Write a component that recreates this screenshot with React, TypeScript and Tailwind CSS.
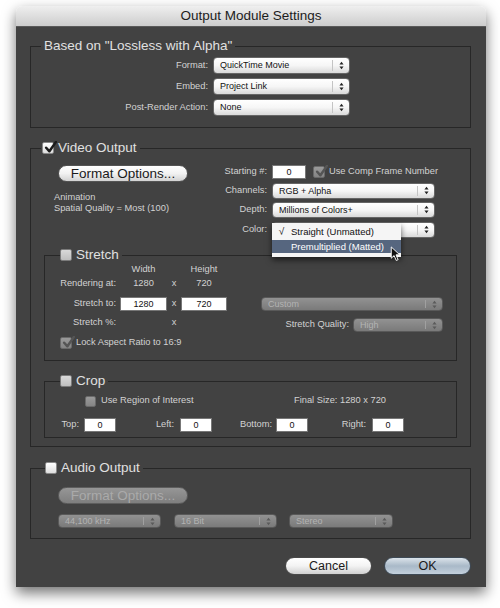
import clsx from 'clsx'

type BoxKind = 'on' | 'off' | 'grayOn' | 'grayOff'

function Check({ kind, className }: { kind: BoxKind; className?: string }) {
  const gray = kind === 'grayOn' || kind === 'grayOff'
  const checked = kind === 'on' || kind === 'grayOn'
  return (
    <span
      className={clsx(
        'relative inline-block shrink-0 rounded-[2px] border',
        gray
          ? 'border-[#6a6a6a] bg-linear-to-b from-[#9a9a9a] to-[#858585]'
          : 'border-[#8a8a8a] bg-linear-to-b from-white to-[#dedede]',
        className
      )}
    >
      {checked && (
        <svg viewBox="0 0 12 12" className="absolute left-[1px] -top-[2px] h-[13px] w-[13px]">
          <path
            d="M2 6.2 L5 9.5 L11 0.8"
            fill="none"
            stroke={gray ? '#555555' : '#1c1c1c'}
            strokeWidth="2.3"
            strokeLinecap="round"
            strokeLinejoin="round"
          />
        </svg>
      )}
    </span>
  )
}

function Stepper({ disabled }: { disabled?: boolean }) {
  const c = disabled ? '#5a5a5a' : '#222222'
  return (
    <svg viewBox="0 0 6 10" className="h-[9px] w-[5px]">
      <path d="M3 0.5 L5.5 3.8 L0.5 3.8 Z" fill={c} />
      <path d="M3 9.5 L5.5 6.2 L0.5 6.2 Z" fill={c} />
    </svg>
  )
}

function Select({ value, className, disabled }: { value: string; className: string; disabled?: boolean }) {
  return (
    <div
      className={clsx(
        'flex items-center rounded-[4px] border',
        disabled
          ? 'border-[#595959] bg-linear-to-b from-[#929292] to-[#7a7a7a] text-[#b3b3b3]'
          : 'border-[#666] bg-linear-to-b from-white via-[#f6f6f6] to-[#d9d9d9] text-[#111]',
        className
      )}
    >
      <span className="flex-1 truncate pl-[6px] text-[9px] leading-none">{value}</span>
      <span
        className={clsx(
          'flex h-[70%] w-[17px] items-center justify-center border-l',
          disabled ? 'border-[#a0a0a0]' : 'border-[#c4c4c4]'
        )}
      >
        <Stepper disabled={disabled} />
      </span>
    </div>
  )
}

function Field({ value, className }: { value: string; className: string }) {
  return (
    <div
      className={clsx(
        'flex items-center justify-center border border-[#777] bg-white text-[9px] leading-none text-[#111]',
        className
      )}
    >
      {value}
    </div>
  )
}

function PillButton({ label, disabled }: { label: string; disabled?: boolean }) {
  return (
    <div
      className={clsx(
        'flex h-[17px] w-[130px] items-center justify-center rounded-full border text-[13.5px] leading-none',
        disabled
          ? 'border-[#5e5e5e] bg-linear-to-b from-[#969696] to-[#7f7f7f] text-[#aaaaaa]'
          : 'border-[#555] bg-linear-to-b from-white via-[#f2f2f2] to-[#d2d2d2] text-[#1a1a1a]'
      )}
    >
      {label}
    </div>
  )
}

function BoxLegend({ kind, label, className, boxClass }: { kind: BoxKind; label: string; className: string; boxClass?: string }) {
  return (
    <legend className={clsx('pr-[3px] text-[13.5px] text-[#e0e0e0]', className)}>
      <span className="flex h-[16px] items-center gap-[4px] leading-none">
        <Check kind={kind} className={clsx('h-[12px] w-[12px]', boxClass)} />
        {label}
      </span>
    </legend>
  )
}

export default function App() {
  return (
    <div className="h-[608px] w-[500px] bg-white pl-[16px] pt-[6px] font-['Liberation_Sans',Arial,sans-serif] text-[9.3px] text-[#d2d2d2]">
      <div className="flex h-[581px] w-[470px] flex-col overflow-hidden rounded-t-[6px] shadow-[0_6px_14px_rgba(0,0,0,0.55)]">
        {/* title bar */}
        <div className="flex h-[21px] items-center justify-center border-b border-[#5a5a5a] bg-linear-to-b from-[#efefef] to-[#cdcdcd] text-[13.5px] text-[#1c1c1c]">
          Output Module Settings
        </div>

        <div className="flex-1 bg-[#424242] pl-[14px] pr-[15px] pt-[11px]">
          {/* Based on */}
          <fieldset className="border border-[#272727] pb-[11px]">
            <legend className="ml-[10px] px-[3px] text-[13.5px] leading-[16px] text-[#e0e0e0]">
              Based on "Lossless with Alpha"
            </legend>
            <div className="flex flex-col gap-[4px] pt-[3px]">
              <div className="flex h-[17px] items-center">
                <span className="w-[177px] text-right">Format:</span>
                <Select value="QuickTime Movie" className="ml-[5px] h-[17px] w-[137px]" />
              </div>
              <div className="flex h-[17px] items-center">
                <span className="w-[177px] text-right">Embed:</span>
                <Select value="Project Link" className="ml-[5px] h-[17px] w-[137px]" />
              </div>
              <div className="flex h-[17px] items-center">
                <span className="w-[177px] text-right">Post-Render Action:</span>
                <Select value="None" className="ml-[5px] h-[17px] w-[137px]" />
              </div>
            </div>
          </fieldset>

          {/* Video Output */}
          <fieldset className="mt-[12px] border border-[#272727] pb-[8px]">
            <BoxLegend kind="on" label="Video Output" className="ml-[10px] pl-[1px]" />

            <div className="flex pt-[9px]">
              <div className="w-[157px] pl-[27px]">
                <PillButton label="Format Options..." />
                <div className="-ml-[4px] mt-[10px] leading-[11px]">
                  <div>Animation</div>
                  <div>Spatial Quality = Most (100)</div>
                </div>
              </div>

              <div className="flex flex-col">
                <div className="flex h-[14px] items-center">
                  <span className="w-[79px] text-right">Starting #:</span>
                  <Field value="0" className="ml-[5px] h-[14px] w-[34px]" />
                  <Check kind="grayOn" className="ml-[7px] h-[12px] w-[12px]" />
                  <span className="ml-[4px]">Use Comp Frame Number</span>
                </div>
                <div className="mt-[4px] flex h-[16px] items-center">
                  <span className="w-[79px] text-right">Channels:</span>
                  <Select value="RGB + Alpha" className="ml-[5px] h-[16px] w-[163px]" />
                </div>
                <div className="mt-[3px] flex h-[16px] items-center">
                  <span className="w-[79px] text-right">Depth:</span>
                  <Select value="Millions of Colors+" className="ml-[5px] h-[16px] w-[163px]" />
                </div>
                <div className="relative mt-[4px] flex h-[16px] items-center">
                  <span className="w-[79px] text-right">Color:</span>
                  <Select value="" className="ml-[5px] h-[16px] w-[163px]" />

                  {/* open popup menu */}
                  <div className="absolute left-[84px] top-[1px] w-[129px] bg-[#f5f5f5] pb-[4px] pt-[1px] text-[9.5px] leading-none text-[#111] shadow-[0_3px_6px_rgba(0,0,0,0.6)]">
                    <div className="flex h-[16px] items-center">
                      <span className="w-[19px] text-center text-[10px]">√</span>
                      <span>Straight (Unmatted)</span>
                    </div>
                    <div className="flex h-[13px] items-center bg-[#56667f] pl-[19px] text-white">
                      Premultiplied (Matted)
                    </div>
                    <svg viewBox="0 0 11 17" className="absolute left-[118px] top-[23px] h-[16px] w-[11px]">
                      <path
                        d="M1 1 L1 13 L4 10.2 L6.3 15.4 L8.3 14.5 L6 9.4 L10 9.4 Z"
                        fill="#111"
                        stroke="#fff"
                        strokeWidth="1"
                        strokeLinejoin="round"
                      />
                    </svg>
                  </div>
                </div>
              </div>
            </div>

            {/* Stretch */}
            <fieldset className="mx-[13px] mt-[9px] border border-[#272727] pb-[11px]">
              <BoxLegend kind="off" label="Stretch" className="ml-[15px]" boxClass="opacity-80" />
              <div className="mt-[1px] flex h-[12px] items-center">
                <span className="w-[75px]" />
                <span className="w-[47px] text-center">Width</span>
                <span className="w-[14px]" />
                <span className="w-[46px] text-center">Height</span>
              </div>
              <div className="mt-[2px] flex h-[12px] items-center">
                <span className="w-[71px] text-right">Rendering at:</span>
                <span className="ml-[4px] w-[47px] text-center">1280</span>
                <span className="w-[14px] text-center">x</span>
                <span className="w-[46px] text-center">720</span>
              </div>
              <div className="mt-[7px] flex h-[14px] items-center">
                <span className="w-[71px] text-right">Stretch to:</span>
                <Field value="1280" className="ml-[4px] h-[14px] w-[47px]" />
                <span className="w-[14px] text-center">x</span>
                <Field value="720" className="h-[14px] w-[46px]" />
                <Select value="Custom" disabled className="ml-[34px] h-[14px] w-[182px]" />
              </div>
              <div className="mt-[7px] flex h-[14px] items-center">
                <div className="flex self-start leading-[8px]">
                  <span className="w-[71px] text-right">Stretch %:</span>
                  <span className="ml-[4px] w-[47px]" />
                  <span className="w-[14px] text-center">x</span>
                  <span className="w-[46px]" />
                </div>
                <span className="w-[122px] text-right">Stretch Quality:</span>
                <Select value="High" disabled className="ml-[4px] h-[14px] w-[90px]" />
              </div>
              <div className="mt-[5px] flex h-[12px] items-center">
                <Check kind="grayOn" className="ml-[15px] h-[12px] w-[12px]" />
                <span className="ml-[4px]">Lock Aspect Ratio to 16:9</span>
              </div>
            </fieldset>

            {/* Crop */}
            <fieldset className="mx-[13px] mt-[12px] border border-[#272727] pb-[5px]">
              <BoxLegend kind="off" label="Crop" className="ml-[15px]" boxClass="opacity-80" />
              <div className="mt-[6px] flex h-[12px] items-center">
                <span className="flex w-[249px] items-center pl-[40px]">
                  <Check kind="grayOff" className="h-[11px] w-[11px]" />
                  <span className="ml-[5px]">Use Region of Interest</span>
                </span>
                <span>Final Size: 1280 x 720</span>
              </div>
              <div className="mt-[11px] flex h-[14px] items-center">
                <span className="w-[34px] text-right">Top:</span>
                <Field value="0" className="ml-[5px] h-[14px] w-[32px]" />
                <span className="w-[58px] text-right">Left:</span>
                <Field value="0" className="ml-[6px] h-[14px] w-[32px]" />
                <span className="w-[60px] text-right">Bottom:</span>
                <Field value="0" className="ml-[4px] h-[14px] w-[32px]" />
                <span className="w-[58px] text-right">Right:</span>
                <Field value="0" className="ml-[6px] h-[14px] w-[32px]" />
              </div>
            </fieldset>
          </fieldset>

          {/* Audio Output */}
          <fieldset className="mt-[13px] border border-[#272727] pb-[10px]">
            <BoxLegend kind="off" label="Audio Output" className="ml-[14px]" />
            <div className="ml-[27px] mt-[11px]">
              <PillButton label="Format Options..." disabled />
            </div>
            <div className="mt-[10px] flex h-[14px] items-center">
              <Select value="44,100 kHz" disabled className="ml-[27px] h-[14px] w-[103px]" />
              <Select value="16 Bit" disabled className="ml-[13px] h-[14px] w-[103px]" />
              <Select value="Stereo" disabled className="ml-[12px] h-[14px] w-[104px]" />
            </div>
          </fieldset>

          {/* dialog buttons */}
          <div className="mt-[18px] flex justify-end gap-[12px]">
            <div className="flex h-[18px] w-[87px] items-center justify-center rounded-full border border-[#4a4a4a] bg-linear-to-b from-white via-[#f3f3f3] to-[#d0d0d0] text-[12.5px] text-[#1a1a1a]">
              Cancel
            </div>
            <div className="flex h-[18px] w-[87px] items-center justify-center rounded-full border border-[#3e4a56] bg-linear-to-b from-[#dbe3ea] via-[#a9b9c8] to-[#c3d0dc] text-[12.5px] text-[#1a1a1a]">
              OK
            </div>
          </div>
        </div>
      </div>
    </div>
  )
}
